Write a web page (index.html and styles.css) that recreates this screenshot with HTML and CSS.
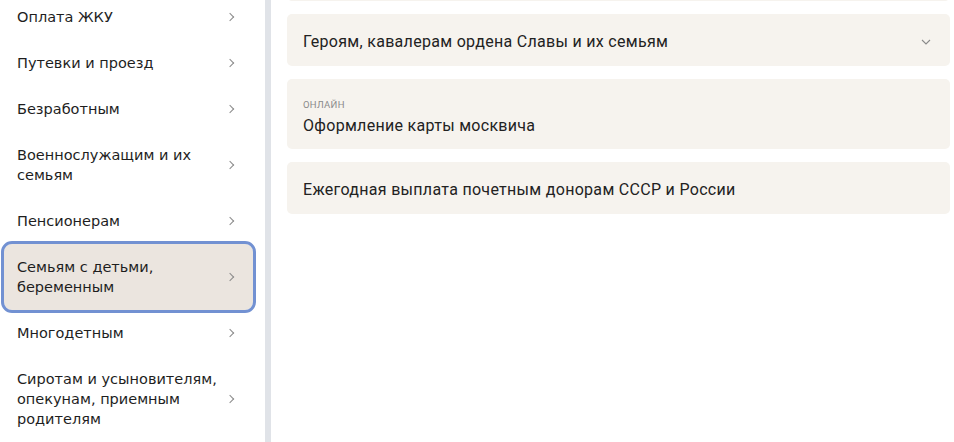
FILE: index.html
```html
<!DOCTYPE html>
<html lang="ru">
  <head>
    <meta charset="UTF-8" />
    <meta name="viewport" content="width=device-width, initial-scale=1" />
    <title>Льготы</title>
    <link rel="stylesheet" href="styles.css">
  </head>
  <body>
    <div class="page">
      <!-- Sidebar -->
      <aside class="sidebar">
        <ul class="cat-list">
          <li class="cat-item"><span>Оплата ЖКУ</span><i class="chev"></i></li>
          <li class="cat-item"><span>Путевки и проезд</span><i class="chev"></i></li>
          <li class="cat-item"><span>Безработным</span><i class="chev"></i></li>
          <li class="cat-item"><span>Военнослужащим и их семьям</span><i class="chev"></i></li>
          <li class="cat-item"><span>Пенсионерам</span><i class="chev"></i></li>
          <li class="cat-item selected"><span>Семьям с детьми, беременным</span><i class="chev"></i></li>
          <li class="cat-item"><span>Многодетным</span><i class="chev"></i></li>
          <li class="cat-item"><span>Сиротам и усыновителям, опекунам, приемным родителям</span><i class="chev"></i></li>
        </ul>
      </aside>

      <!-- Services -->
      <main class="content">
        <div class="card cut"></div>

        <div class="card row">
          <span class="card-title">Героям, кавалерам ордена Славы и их семьям</span>
          <svg class="chev-down" width="10" height="6" viewBox="0 0 10 6">
            <path d="M1 1l4 4 4-4" fill="none" stroke="#8a8a8a" stroke-width="1.1" />
          </svg>
        </div>

        <div class="card tall">
          <div class="card-label">Онлайн</div>
          <div class="card-title">Оформление карты москвича</div>
        </div>

        <div class="card">
          <span class="card-title">Ежегодная выплата почетным донорам СССР и России</span>
        </div>
      </main>
    </div>
  </body>
</html>
```

FILE: styles.css
```css
body {
  margin: 0;
  background: #fff;
  color: #1e1e1e;
  overflow: hidden;
}

.page {
  display: flex;
  height: 442px;
}

/* Sidebar */
.sidebar {
  width: 265px;
  flex-shrink: 0;
  border-right: 6px solid #e0e3e8;
  font-family: "DejaVu Sans", sans-serif;
  font-size: 14.5px;
}

.cat-list {
  list-style: none;
  margin: -6px 0 0;
  padding: 0 12px 0 4px;
}

.cat-item {
  display: flex;
  align-items: center;
  justify-content: space-between;
  padding: 13px 20px 13px 13px;
  line-height: 20px;
  border-radius: 8px;
}

.cat-item span {
  max-width: 205px;
}

.cat-item.selected {
  background: #ebe5df;
  outline: 3px solid #7291d2;
}

.chev {
  width: 5px;
  height: 5px;
  border-top: 1px solid #8a8a8a;
  border-right: 1px solid #8a8a8a;
  transform: rotate(45deg);
  flex-shrink: 0;
}

/* Content */
.content {
  flex: 1;
  padding: 0 4px 0 16px;
  display: flex;
  flex-direction: column;
  gap: 13px;
  font-family: Roboto, sans-serif;
  font-size: 16px;
  letter-spacing: 0.3px;
  color: #222;
}

.card {
  background: #f6f3ee;
  border-radius: 5px;
  padding: 18px 16px 15px;
  line-height: 19px;
}

.card.cut {
  margin-top: -51px;
  height: 19px;
}

.card.row {
  display: flex;
  align-items: center;
  justify-content: space-between;
}

.card.tall {
  padding: 19px 16px 14px;
}

.card-label {
  font-size: 9.5px;
  line-height: 13px;
  color: #8a8a8a;
  text-transform: uppercase;
  letter-spacing: 0.3px;
  margin-bottom: 5px;
}

.chev-down {
  margin-right: 3px;
}
```
